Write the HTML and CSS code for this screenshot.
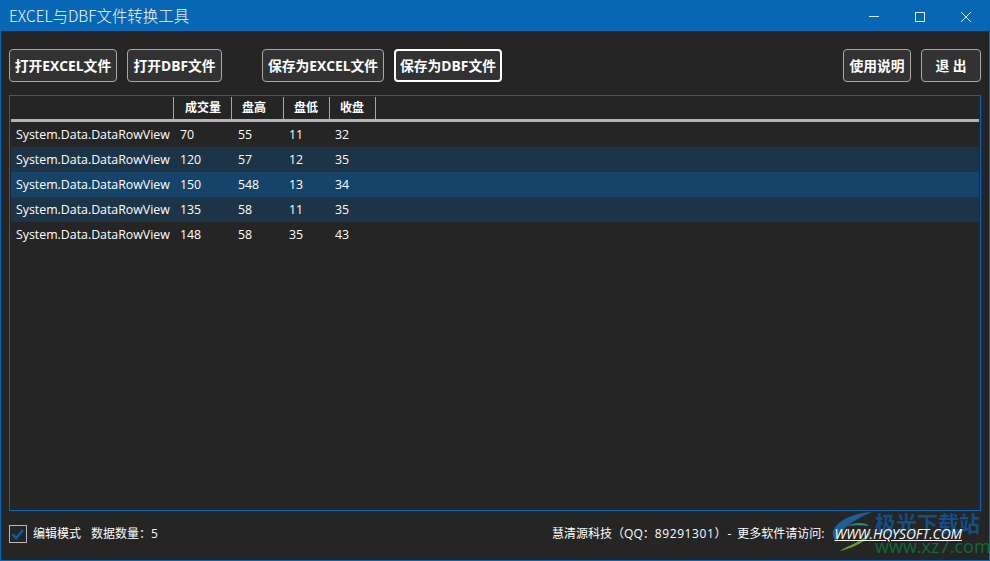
FILE: index.html
```html
<!DOCTYPE html>
<html lang="zh">
<head>
<meta charset="utf-8">
<title>EXCEL与DBF文件转换工具</title>
<link rel="stylesheet" href="styles.css">
</head>
<body>
<div class="window">
  <header class="titlebar">
    <span class="title">EXCEL与DBF文件转换工具</span>
    <div class="controls">
      <svg class="ctl" width="46" height="30" viewBox="0 0 46 30"><path d="M18 15.5h10" stroke="#dfe9f3" fill="none"/></svg>
      <svg class="ctl" width="46" height="30" viewBox="0 0 46 30"><rect x="18.5" y="11.5" width="9" height="9" stroke="#dfe9f3" fill="none"/></svg>
      <svg class="ctl" width="46" height="30" viewBox="0 0 46 30"><path d="M18 11l10 10M28 11l-10 10" stroke="#dfe9f3" fill="none"/></svg>
    </div>
  </header>
  <div class="toolbar">
    <button class="btn b1">打开EXCEL文件</button>
    <button class="btn b2">打开DBF文件</button>
    <button class="btn b3">保存为EXCEL文件</button>
    <button class="btn b4 focus">保存为DBF文件</button>
    <span class="spacer"></span>
    <button class="btn b5">使用说明</button>
    <button class="btn b6">退 出</button>
  </div>
  <section class="grid">
    <div class="head">
      <div class="hc c0"></div>
      <div class="hc c1">成交量</div>
      <div class="hc c2">盘高</div>
      <div class="hc c3">盘低</div>
      <div class="hc c4">收盘</div>
    </div>
    <div class="row"><span class="c0">System.Data.DataRowView</span><span class="c1">70</span><span class="c2">55</span><span class="c3">11</span><span class="c4">32</span></div>
    <div class="row alt"><span class="c0">System.Data.DataRowView</span><span class="c1">120</span><span class="c2">57</span><span class="c3">12</span><span class="c4">35</span></div>
    <div class="row sel"><span class="c0">System.Data.DataRowView</span><span class="c1">150</span><span class="c2">548</span><span class="c3">13</span><span class="c4">34</span></div>
    <div class="row alt"><span class="c0">System.Data.DataRowView</span><span class="c1">135</span><span class="c2">58</span><span class="c3">11</span><span class="c4">35</span></div>
    <div class="row"><span class="c0">System.Data.DataRowView</span><span class="c1">148</span><span class="c2">58</span><span class="c3">35</span><span class="c4">43</span></div>
  </section>
  <footer class="status">
    <span class="check"><svg width="16" height="16" viewBox="0 0 16 16"><path d="M2.5 8.5l3.5 3.5 7-8" stroke="#0a5ca8" stroke-width="2.6" fill="none"/></svg></span>
    <span class="edit">编辑模式</span>
    <span class="count">数据数量：5</span>
    <span class="spacer"></span>
    <span class="company">慧清源科技（QQ：<span class="wide">89291301</span>）<span class="dash">-</span>更多软件请访问:</span>
    <a class="link">WWW.HQYSOFT.COM</a>
  </footer>
  <div class="watermark">
    <svg class="wm-logo" width="42" height="42" viewBox="0 0 42 42"><path d="M40 1C24 2 6 8 1 20c-1 5 1 9 5 11C5 22 18 10 40 1z" fill="#1d5f96"/><path d="M15 15c8-4 19-4 22 0-7-1-15-1-22 0z" fill="#2c8a7a"/><path d="M38 20c2 7-13 16-30 20 6-5 24-9 30-20z" fill="#6a9a2c"/></svg>
    <span class="wm-cn">极光下载站</span>
    <span class="wm-en">www.xz7.com</span>
  </div>
</div>
</body>
</html>
```
FILE: styles.css
```css
* { box-sizing: border-box; }
html, body { margin: 0; padding: 0; }
body { width: 990px; height: 561px; overflow: hidden; background: #252525; font-family: "Open Sans", "Noto Sans CJK SC", sans-serif; color: #fff; }
.window { position: relative; width: 990px; height: 561px; overflow: hidden; display: flex; flex-direction: column; background: #252525; border: 1px solid #0767b4; border-top: 0; }
.titlebar { height: 31px; margin: 0 -1px; background: #0767b4; display: flex; align-items: center; justify-content: space-between; padding-left: 9px; padding-right: 1px; flex: none; }
.title { font-size: 15.45px; font-weight: 300; color: #f4f8fc; font-family: "Noto Sans CJK SC", sans-serif; padding-bottom: 2px; }
.controls { display: flex; }
.ctl { display: block; }
.toolbar { display: flex; height: 33px; margin-top: 18px; padding: 0 8px; flex: none; }
.btn { height: 33px; background: #323232; border: 1px solid #a8a8a8; border-radius: 4px; color: #fff; font: bold 13.8px "Open Sans", "Noto Sans CJK SC", sans-serif; padding: 0 0 2px; white-space: nowrap; }
.btn.focus { border: 2px solid #fff; }
.b1 { width: 108px; }
.b2 { width: 95px; margin-left: 10px; }
.b3 { width: 122px; margin-left: 40px; }
.b4 { width: 108px; margin-left: 10px; }
.b5 { width: 68px; }
.b6 { width: 60px; margin-left: 10px; }
.spacer { flex: 1; }
.grid { margin: 13px 8px 0 8px; height: 416px; border: 1px solid #0767b4; padding: 1px; flex: none; }
.head { display: flex; height: 25px; border-bottom: 3px solid #b4b4b4; }
.hc { height: 22px; border-right: 1px solid #a8a8a8; font-size: 12px; font-weight: bold; line-height: 20px; padding-left: 10px; font-family: "Noto Sans CJK SC", sans-serif; }
.hc.c1 { padding-left: 11px; }
.row { display: flex; height: 25px; font-size: 12.35px; line-height: 25px; white-space: nowrap; }
.row span { padding-left: 5px; display: block; }
.alt { background: #1d3447; }
.sel { background: #164469; }
.c0 { width: 163px; }
.c1 { width: 58px; }
.c2 { width: 52px; }
.c3 { width: 46px; }
.c4 { width: 46px; }
.row .c1, .row .c2 { padding-left: 6px; }
.status { display: flex; align-items: center; height: 18px; margin-top: 14px; padding: 0 8px; font-size: 12px; flex: none; }
.check { width: 18px; height: 18px; border: 1px solid #b8b8b8; display: flex; align-items: center; justify-content: center; flex: none; }
.edit { margin-left: 6px; padding-bottom: 2px; }
.count { margin-left: 10px; padding-bottom: 2px; }
.company { color: #fff; white-space: nowrap; padding-bottom: 2px; }
.wide { letter-spacing: 0.6px; }
.dash { margin: 0 6px 0 1px; }
.link { font-style: italic; font-size: 13.7px; text-decoration: underline; margin-left: 10px; margin-right: 19px; padding-bottom: 2px; white-space: nowrap; position: relative; z-index: 2; }
.watermark { position: absolute; left: 831px; top: 511px; width: 158px; height: 46px; }
.wm-logo { position: absolute; left: 0; top: 0; }
.wm-cn { position: absolute; left: 43px; top: -4px; font: bold 21px "Noto Sans CJK SC", sans-serif; color: #134f85; white-space: nowrap; }
.wm-en { position: absolute; left: 43px; top: 23px; font: 18px "Open Sans", sans-serif; color: #0e6a3a; white-space: nowrap; }
```
